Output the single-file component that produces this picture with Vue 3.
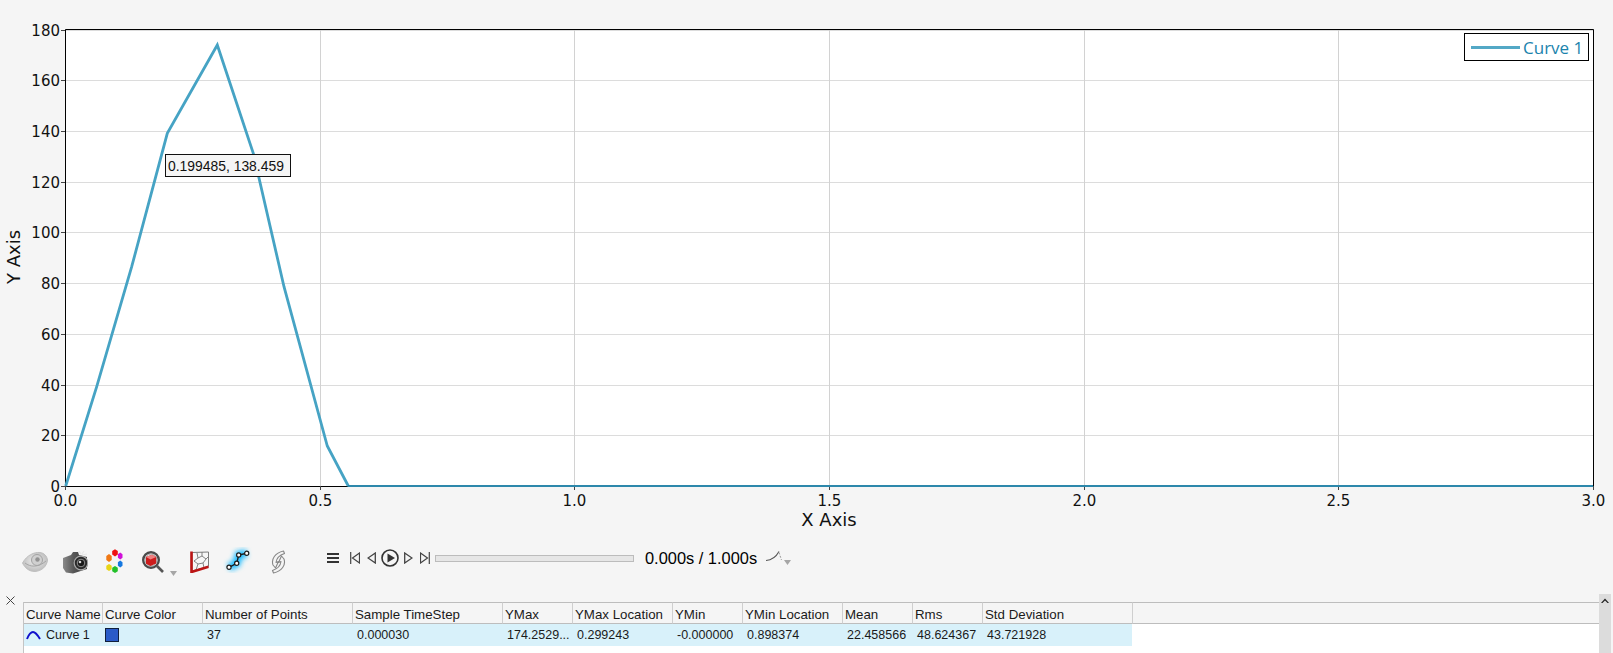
<script setup>
const L = 65.5, R = 1593.5, T = 29.5, B = 486
const yTicks = [0, 20, 40, 60, 80, 100, 120, 140, 160, 180].map(v => ({ v, y: Math.round(B - (v / 180) * (B - T)) + 0.5 }))
const xTicks = ['0.0', '0.5', '1.0', '1.5', '2.0', '2.5', '3.0'].map((v, i) => ({ v, x: Math.round(L + (i / 6) * (R - L) - 0.5) + 0.5 }))
const curve = '65.7,486 96.7,386.7 131.7,266.7 167.3,133.3 217.3,45 253.3,153.3 284,286.7 327.3,446 348.3,486'
const cols = [78, 100, 150, 150, 70, 100, 70, 100, 70, 70, 150]
const heads = ['Curve Name', 'Curve Color', 'Number of Points', 'Sample TimeStep', 'YMax', 'YMax Location', 'YMin', 'YMin Location', 'Mean', 'Rms', 'Std Deviation']
const values = ['37', '0.000030', '174.2529...', '0.299243', '-0.000000', '0.898374', '22.458566', '48.624367', '43.721928']
function hex(cx, cy, rx, ry) {
  const p = []
  for (let i = 0; i < 6; i++) {
    const a = (Math.PI / 3) * i + Math.PI / 6
    p.push((cx + rx * Math.cos(a)).toFixed(1) + ',' + (cy + ry * Math.sin(a)).toFixed(1))
  }
  return p.join(' ')
}
const swatches = [
  { c: '#ee1111', p: hex(9, 3.8, 3.2, 3.6) },
  { c: '#d010d8', p: hex(14.2, 7, 2.7, 3.4) },
  { c: '#1578e0', p: hex(14.2, 15, 2.7, 3.4) },
  { c: '#22c02a', p: hex(9, 20.5, 3.2, 3.4) },
  { c: '#e8d415', p: hex(3, 18.5, 3.1, 3.6) },
  { c: '#f07814', p: hex(3, 9, 3.1, 4) }
]
</script>

<template>
  <div class="app">
    <section class="chart">
      <svg class="plot" width="1613" height="530" viewBox="0 0 1613 530">
        <rect x="65" y="29" width="1529" height="457" fill="#fff" />
        <line v-for="t in yTicks" :key="'g' + t.v" x1="65" :x2="1593" :y1="t.y" :y2="t.y" class="grid" />
        <line v-for="t in xTicks" :key="'v' + t.v" :x1="t.x" :x2="t.x" y1="29" y2="486" class="grid-v" />
        <path d="M65.5 29.5H1593.5V486.500H65.5Z" fill="none" stroke="#000" stroke-width="1" />
        <line v-for="t in yTicks" :key="'m' + t.v" x1="61" x2="65" :y1="t.y" :y2="t.y" class="tick" />
        <line v-for="t in xTicks" :key="'n' + t.v" :x1="t.x" :x2="t.x" y1="486" y2="490" class="tick" />
        <polyline :points="curve" fill="none" stroke="#46a3c4" stroke-width="2.800" stroke-linejoin="miter" />
        <line x1="348" x2="1593" y1="486" y2="486" stroke="#2d88ab" stroke-width="2" />
        <text v-for="t in yTicks" :key="'l' + t.v" x="60" :y="t.y + 5.5" text-anchor="end" class="tl">{{ t.v }}</text>
        <text v-for="t in xTicks" :key="'x' + t.v" :x="t.x" y="506" text-anchor="middle" class="tl">{{ t.v }}</text>
        <text x="829" y="526" text-anchor="middle" class="al">X Axis</text>
        <text transform="translate(20 257) rotate(-90)" text-anchor="middle" class="al">Y Axis</text>
      </svg>
      <div class="legend">
        <span class="legend-line"></span>
        <span>Curve 1</span>
      </div>
      <div class="tip">0.199485, 138.459</div>
    </section>

    <section class="toolbar">
      <!-- eye -->
      <svg class="ic i-eye" width="26" height="22" viewBox="0 0 26 22">
        <defs>
          <radialGradient id="eg" cx="50%" cy="45%" r="60%"><stop offset="0" stop-color="#efefef" /><stop offset="1" stop-color="#b8b8b8" /></radialGradient>
        </defs>
        <path d="M0.5 12C5 4 12 1 18 1.500C22 2 25 5 25.500 9C25 15 20 20 13 20.500C7 20.500 3 17 0.500 12Z" fill="url(#eg)" stroke="#bfbfbf" />
        <circle cx="15" cy="9" r="5.500" fill="#d0d0d0" stroke="#a3a3a3" />
        <circle cx="15.500" cy="8.500" r="2.200" fill="#929292" />
        <path d="M3 12C8 16 16 17 24 10" fill="none" stroke="#a6a6a6" />
      </svg>
      <!-- camera -->
      <svg class="ic i-cam" width="25" height="23" viewBox="0 0 25 23">
        <defs>
          <linearGradient id="cg" x1="0" x2="1" y1="0" y2="0"><stop offset="0" stop-color="#8a8a8a" /><stop offset=".45" stop-color="#565656" /><stop offset="1" stop-color="#3c3c3c" /></linearGradient>
        </defs>
        <path d="M0 7L8 4L10 1L15 1L16 4L24 6V18L10 22.500L3 21.500L0 17Z" fill="url(#cg)" />
        <path d="M16 0L18 3M21 0L19 3M24 3L19 4" stroke="#e8e8e8" stroke-width="1.200" />
        <circle cx="18" cy="12" r="6.800" fill="#2a2a2a" stroke="#a8a8a8" stroke-width="1.200" />
        <circle cx="18" cy="12" r="3.800" fill="#181818" stroke="#8e8e8e" />
        <circle cx="17" cy="11" r="1.300" fill="#d4d4d4" />
      </svg>
      <!-- colours -->
      <svg class="ic i-col" width="19" height="26" viewBox="0 0 19 26">
        <polygon v-for="s in swatches" :key="s.c" :points="s.p" :fill="s.c" />
      </svg>
      <!-- zoom -->
      <svg class="ic i-zoom" width="22" height="22" viewBox="0 0 22 22">
        <circle cx="9" cy="9" r="7.800" fill="#e6e6e6" stroke="#4a4a4a" stroke-width="2.400" />
        <circle cx="9" cy="9" r="6" fill="#e8e8e8" stroke="#a9a9a9" />
        <path d="M4 6L10 3.800L14.200 6V12.400L8.500 15L4 12.800Z" fill="#cc1c1c" />
        <path d="M4 6L10 3.800L14.200 6L8.500 8.400Z" fill="#ef8080" />
        <path d="M15 15L21 21" stroke="#555" stroke-width="2.600" />
      </svg>
      <svg class="ic i-drop" width="7" height="5" viewBox="0 0 7 5"><path d="M0 0H7L3.500 5Z" fill="#a6a6a6" /></svg>
      <!-- mesh -->
      <svg class="ic i-mesh" width="19" height="22" viewBox="0 0 19 22">
        <path d="M2 1.500L18.500 1V15.500L2 20Z" fill="#f6f6f6" stroke="#7c7c7c" />
        <path d="M7 2L8 7L4 10L8 13L6 19M12 1L12 5L8 7M12 5L16 8L18 6M16 8L13 12L8 13M13 12L14 17" fill="none" stroke="#777" stroke-width=".9" />
        <path d="M1.500 0.500V21L18.500 15.800" fill="none" stroke="#bb1414" stroke-width="2.600" />
      </svg>
      <!-- curve -->
      <svg class="ic i-curve" width="32" height="30" viewBox="0 0 32 30">
        <defs><filter id="gl" x="-40%" y="-40%" width="180%" height="180%"><feGaussianBlur stdDeviation="2.400" /></filter></defs>
        <path d="M6 20.300L13.700 16.300L15.700 8L23.700 6.300" fill="none" stroke="#1cbcff" stroke-width="8" filter="url(#gl)" />
        <path d="M6 20.300L13.700 16.300L15.700 8L23.700 6.300" fill="none" stroke="#1c1c1c" stroke-width="1.400" />
        <circle cx="6" cy="20.300" r="2.100" fill="#fff" stroke="#1c1c1c" stroke-width="1.200" />
        <circle cx="13.700" cy="16.300" r="2.100" fill="#fff" stroke="#1c1c1c" stroke-width="1.200" />
        <circle cx="15.700" cy="8" r="2.100" fill="#fff" stroke="#1c1c1c" stroke-width="1.200" />
        <circle cx="23.700" cy="6.300" r="2.100" fill="#fff" stroke="#1c1c1c" stroke-width="1.200" />
      </svg>
      <!-- sync -->
      <svg class="ic i-sync" width="15" height="24" viewBox="0 0 15 24">
        <path d="M2 15C0 9 4 3 12.500 1L13.500 3.500C9 5 5.500 8.500 5 12.500L7.500 11.500L4.500 18Z" fill="#f4f4f4" stroke="#868686" stroke-width="1.100" stroke-linejoin="round" />
        <path d="M13 9C15 15 11 21 2.500 23L1.500 20.500C6 19 9.500 15.500 10 11.500L7.500 12.500L10.500 6Z" fill="#f4f4f4" stroke="#868686" stroke-width="1.100" stroke-linejoin="round" />
      </svg>

      <div class="transport">
        <svg class="tr t-menu" width="12" height="10" viewBox="0 0 12 10"><path d="M0 1H12M0 5H12M0 9H12" stroke="#333" stroke-width="2" /></svg>
        <svg class="tr t-first" width="10" height="12" viewBox="0 0 10 12"><path d="M.7 0V12M9.500 1L2.500 6L9.500 11Z" fill="none" stroke="#444" stroke-width="1.200" /></svg>
        <svg class="tr t-prev" width="9" height="12" viewBox="0 0 9 12"><path d="M8.300 1L1 6L8.300 11Z" fill="none" stroke="#444" stroke-width="1.300" /></svg>
        <svg class="tr t-play" width="18" height="18" viewBox="0 0 18 18"><circle cx="9" cy="9" r="8" fill="none" stroke="#333" stroke-width="1.600" /><path d="M6.500 4.500L14 9L6.500 13.500Z" fill="#333" /></svg>
        <svg class="tr t-next" width="9" height="12" viewBox="0 0 9 12"><path d="M.7 1L8 6L.7 11Z" fill="none" stroke="#444" stroke-width="1.300" /></svg>
        <svg class="tr t-last" width="10" height="12" viewBox="0 0 10 12"><path d="M9.300 0V12M.5 1L7.500 6L.5 11Z" fill="none" stroke="#444" stroke-width="1.200" /></svg>
        <div class="slider"></div>
        <span class="time">0.000s / 1.000s</span>
        <svg class="tr t-ramp" width="16" height="11" viewBox="0 0 16 11"><path d="M0 9.500C6 9 10 6 13 0.500" fill="none" stroke="#555" stroke-width="1.100" /><path d="M13 1.500L15.500 9" fill="none" stroke="#999" stroke-width="1" stroke-dasharray="2 1.500" /></svg>
        <svg class="tr t-drop" width="7" height="5" viewBox="0 0 7 5"><path d="M0 0H7L3.500 5Z" fill="#a6a6a6" /></svg>
      </div>
    </section>

    <section class="panel">
      <div class="close-col">
        <svg width="9" height="9" viewBox="0 0 9 9"><path d="M.5 .5L8.500 8.500M8.500 .5L.5 8.500" stroke="#444" stroke-width="1" /></svg>
      </div>
      <div class="tbl-wrap">
        <table class="tbl">
          <colgroup>
            <col v-for="(c, i) in cols" :key="i" :style="{ width: c + 'px' }" />
            <col />
          </colgroup>
          <thead>
            <tr>
              <th v-for="h in heads" :key="h">{{ h }}</th>
              <th class="filler"></th>
            </tr>
          </thead>
          <tbody>
            <tr>
              <td class="name">
                <svg width="15" height="9" viewBox="0 0 15 9"><path d="M1 8C3 3 5 1 7 1C9 1 11 3 14 8" fill="none" stroke="#1010cc" stroke-width="2" /></svg>
                <span>Curve 1</span>
              </td>
              <td><span class="swatch"></span></td>
              <td v-for="(v, i) in values" :key="i">{{ v }}</td>
              <td class="blank"></td>
            </tr>
          </tbody>
        </table>
      </div>
      <div class="scroll"><svg width="8" height="5" viewBox="0 0 8 5"><path d="M0 5L4 .5L8 5L6.500 5L4 2.500L1.500 5Z" fill="#222" /></svg></div>
    </section>
  </div>
</template>

<style scoped>
.app {
  width: 1613px;
  height: 653px;
  background: #f5f5f5;
  display: flex;
  flex-direction: column;
  overflow: hidden;
  font-family: "Liberation Sans", Arial, sans-serif;
  color: #111;
}
.chart { position: relative; height: 530px; flex: none; }
.plot { display: block; }
.grid { stroke: #dcdcdc; stroke-width: 1; }
.grid-v { stroke: #d2d2d2; stroke-width: 1; }
.tick { stroke: #444; stroke-width: 1; }
.tl { font-family: "DejaVu Sans", sans-serif; font-size: 15px; fill: #111; }
.al { font-family: "DejaVu Sans", sans-serif; font-size: 18px; fill: #111; }
.legend {
  position: absolute;
  left: 1464px;
  top: 33px;
  width: 125px;
  height: 28px;
  box-sizing: border-box;
  border: 1px solid #000;
  background: #fff;
  display: flex;
  align-items: center;
  gap: 3px;
  padding-left: 6px;
  font-family: "Open Sans", sans-serif;
  font-size: 17px;
  color: #1b84ad;
}
.legend-line { width: 49px; height: 3px; background: #53a8c6; }
.tip {
  position: absolute;
  left: 165px;
  top: 154px;
  height: 23px;
  width: 126px;
  box-sizing: border-box;
  border: 1px solid #111;
  background: #f5f5f5;
  font-size: 13.900px;
  line-height: 22px;
  padding-left: 2px;
  white-space: nowrap;
}
.toolbar {
  height: 64px;
  flex: none;
  display: flex;
  align-items: center;
}
.ic { display: block; flex: none; }
.i-eye { margin-left: 22px; }
.i-cam { margin-left: 15px; }
.i-col { margin-left: 18px; }
.i-zoom { margin-left: 17px; }
.i-drop { margin-left: 6px; margin-top: 23px; }
.i-mesh { margin-left: 13px; }
.i-curve { margin-left: 14px; }
.i-sync { margin-left: 16px; }
.transport {
  display: flex;
  align-items: center;
  margin-left: 41px;
  margin-bottom: 8px;
}
.tr { display: block; flex: none; }
.t-first { margin-left: 11px; }
.t-prev { margin-left: 7px; }
.t-play { margin-left: 5px; }
.t-next { margin-left: 5px; }
.t-last { margin-left: 7px; }
.slider {
  width: 199px;
  height: 7px;
  margin-left: 5px;
  box-sizing: border-box;
  border: 1px solid #bcbcbc;
  background: #e6e6e6;
}
.time { font-size: 16.400px; margin-left: 11px; white-space: nowrap; color: #000; }
.t-ramp { margin-left: 9px; margin-top: -4px; }
.t-drop { margin-left: 2px; margin-top: 9px; }
.panel { flex: 1; display: flex; min-height: 0; }
.close-col { width: 23px; flex: none; padding: 2px 0 0 6px; box-sizing: border-box; line-height: 0; }
.close-col svg { display: block; }
.tbl-wrap { flex: 1; margin-top: 8px; background: #fff; min-width: 0; border-left: 1px solid #c4c4c4; }
.tbl {
  width: 100%;
  table-layout: fixed;
  border-collapse: separate;
  border-spacing: 0;
  font-size: 12.500px;
}
.tbl th {
  height: 22px;
  box-sizing: border-box;
  background: #f5f5f5;
  border-top: 1px solid #bdbdbd;
  border-bottom: 1px solid #bdbdbd;
  border-left: 1px solid #cfcfcf;
  font-weight: 400;
  font-size: 13.300px;
  text-align: left;
  padding: 2px 0 0 2px;
  white-space: nowrap;
  overflow: hidden;
  color: #1a1a1a;
}
.tbl th:first-child { border-left: 0; }
.tbl td {
  height: 22px;
  box-sizing: border-box;
  background: #d8f1fa;
  padding: 0 0 0 5px;
  white-space: nowrap;
  overflow: hidden;
  color: #1a1a1a;
}
.tbl td.blank { background: #fff; }
.tbl td.name { padding-left: 2px; }
.name svg { vertical-align: -1px; margin-right: 5px; }
.tbl td:nth-child(2) { padding-left: 3px; }
.swatch {
  display: block;
  width: 14px;
  height: 14px;
  box-sizing: border-box;
  background: #2a5bc8;
  border: 1px solid #10203c;
}
.scroll {
  width: 12px;
  margin-right: 2px;
  flex: none;
  background: #dcdcdc;
  display: flex;
  justify-content: center;
  padding-top: 4px;
}
.scroll svg { display: block; }
</style>
